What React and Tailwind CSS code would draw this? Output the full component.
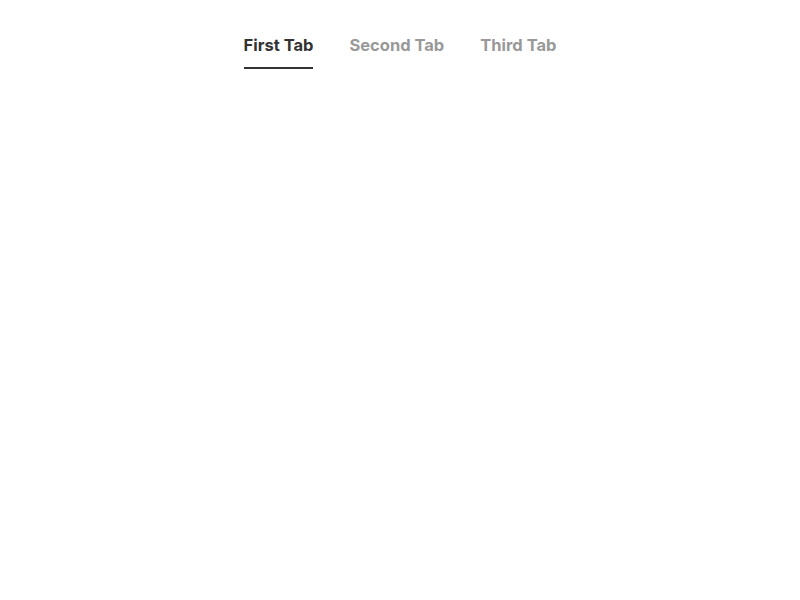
import React, { useState } from "react";

const tabs = ["First Tab", "Second Tab", "Third Tab"];

const App = () => {
  const [active, setActive] = useState(0);

  return (
    <div className="min-h-screen bg-white font-['Inter',sans-serif]">
      <div className="flex justify-center gap-[36px] pt-[33px]">
        {tabs.map((t, i) => (
          <button
            key={t}
            onClick={() => setActive(i)}
            className={
              "pb-[10px] text-[16.5px] leading-[24px] font-bold border-b-2 " +
              (i === active
                ? "text-[#333333] border-[#333333]"
                : "text-[#999999] border-transparent")
            }
          >
            {t}
          </button>
        ))}
      </div>
    </div>
  );
};

export default App;
